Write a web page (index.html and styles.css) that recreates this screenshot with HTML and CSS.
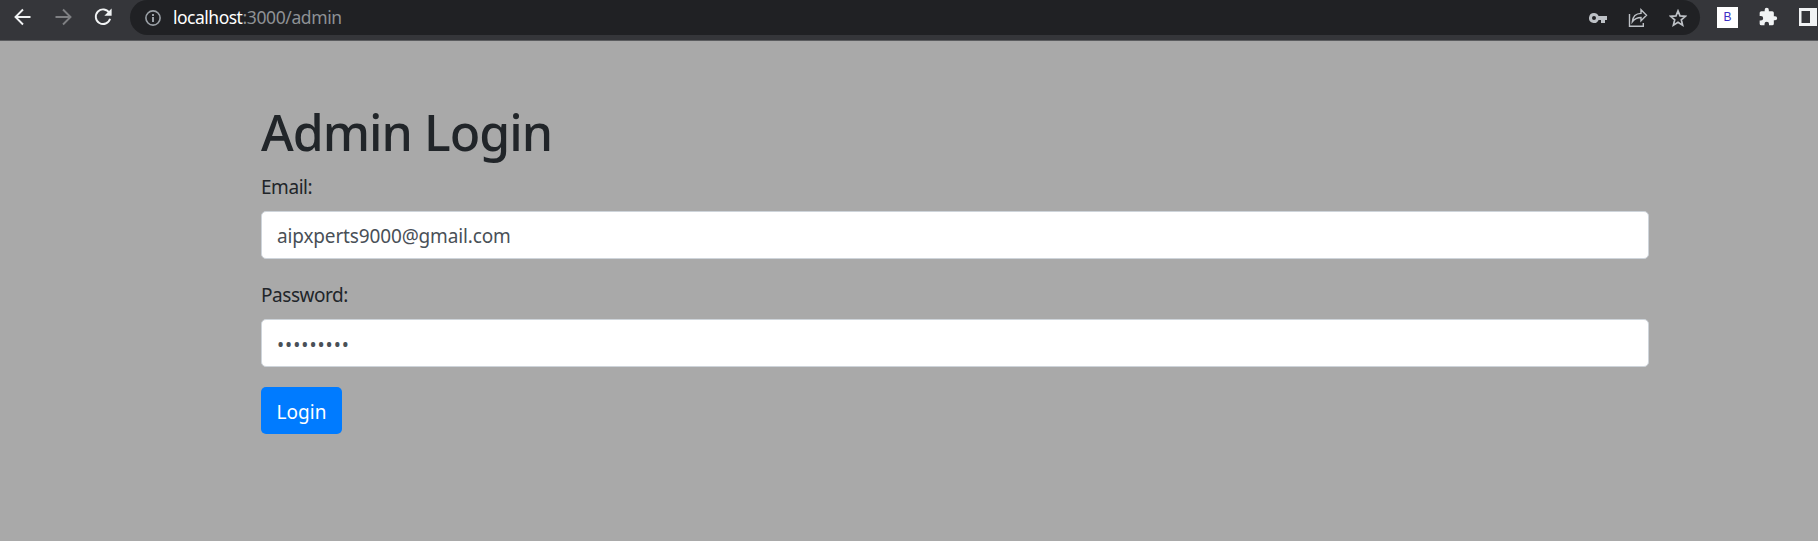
FILE: index.html
```html
<!DOCTYPE html>
<html lang="en">
<head>
<meta charset="utf-8">
<title>Admin Login</title>
<link rel="stylesheet" href="styles.css">
</head>
<body>
<header class="toolbar">
  <nav class="nav">
    <svg class="icon" viewBox="0 0 18 18"><path class="line" d="M16.500 9H2M9 1.500 1.500 9 9 16.500"/></svg>
    <svg class="icon dim" viewBox="0 0 18 18"><path class="line" d="M1.500 9H16M9 1.500 16.500 9 9 16.500"/></svg>
    <svg class="icon" viewBox="0 0 18 18"><path class="line" d="M15.400 5A7.300 7.300 0 1 0 16.100 10.800"/><path class="fill" d="M17.600.5v7.300h-7.300z"/></svg>
  </nav>
  <div class="address">
    <svg class="info" viewBox="0 0 16 16"><circle class="line" cx="8" cy="8" r="7.100"/><path class="fill" d="M7 7h2v5H7zM7 4h2v2H7z"/></svg>
    <span class="url"><span class="host">localhost</span><span class="path">:3000/admin</span></span>
    <div class="actions">
      <svg class="icon key" viewBox="0 0 18 18"><path class="fill" fill-rule="evenodd" d="M5 4a5 5 0 1 0 4.600 7H12v3h4v-3h2V7H9.600A5 5 0 0 0 5 4zm0 3a2 2 0 1 1 0 4 2 2 0 0 1 0-4z"/></svg>
      <svg class="share" viewBox="0 0 20 20"><path class="thin" d="M1.500 6v12.300h13.800V15M4.300 13.800C4.800 8.500 8.200 5.500 13 5.400V1.800l5.500 5.500-5.500 5.500V9.500c-3.800 0-6.500 1.300-8.700 4.300z"/></svg>
      <svg class="icon star" viewBox="0 0 18 18"><path class="line" d="m9 1.900 2 5 5.400.4-4.100 3.500 1.300 5.300L9 13.200l-4.600 2.900 1.300-5.300-4.100-3.500L7 6.900z"/></svg>
    </div>
  </div>
  <div class="extensions">
    <span class="badge">B</span>
    <svg class="puzzle" viewBox="0 0 24 24"><path class="fill" d="M20.500 11H19V7a2 2 0 0 0-2-2h-4V3.500a2.500 2.500 0 0 0-5 0V5H4a2 2 0 0 0-2 2v3.800h1.500a2.700 2.700 0 0 1 0 5.400H2V20a2 2 0 0 0 2 2h3.800v-1.500a2.700 2.700 0 0 1 5.400 0V22H17a2 2 0 0 0 2-2v-4h1.500a2.500 2.500 0 0 0 0-5z"/></svg>
    <svg class="panel" viewBox="0 0 18 18"><path class="fill" fill-rule="evenodd" d="M0 0h18v18H0zM2.500 3v12H11V3z"/></svg>
  </div>
</header>
<main class="container">
  <h1 class="title">Admin Login</h1>
  <form>
    <div class="group">
      <label class="label" for="email">Email:</label>
      <input class="control" id="email" type="text" value="aipxperts9000@gmail.com">
    </div>
    <div class="group">
      <label class="label" for="password">Password:</label>
      <input class="control secret" id="password" type="password" value="123456789">
    </div>
    <button class="button" type="button">Login</button>
  </form>
</main>
</body>
</html>
```
FILE: styles.css
```css
* { box-sizing: border-box; }
body {
  margin: 0;
  height: 541px;
  overflow: hidden;
  background: #a9a9a9;
  color: #212529;
  font-family: "Noto Sans", "Open Sans", sans-serif;
  font-size: 19px;
}
.toolbar {
  display: flex;
  align-items: flex-start;
  height: 41px;
  background: #35363a;
  border-bottom: 1px solid #5b5c5f;
  color: #f1f3f4;
}
.nav { display: flex; gap: 22px; width: 130px; padding: 8px 0 0 14px; }
svg { display: block; flex: none; }
.icon { width: 18px; height: 18px; }
.dim { color: #7f8083; }
.line { fill: none; stroke: currentColor; stroke-width: 1.9; }
.thin { fill: none; stroke: currentColor; stroke-width: 1.4; }
.fill { fill: currentColor; }
.address {
  display: flex;
  align-items: center;
  width: 1570px;
  height: 35px;
  padding: 0 13px 0 15px;
  border-radius: 17.5px;
  background: #202124;
  color: #bdc1c6;
}
.info { width: 16px; height: 16px; margin-top: 1px; color: #9aa0a6; }
.info .line { stroke-width: 1.6; }
.url { margin-left: 12px; font-size: 17.500px; letter-spacing: -.38px; line-height: 35px; }
.host { color: #fff; letter-spacing: -.5px; }
.path { color: #8e9195; }
.actions { display: flex; align-items: center; gap: 21px; margin-left: auto; }
.share { width: 20px; height: 20px; }
.star .line { stroke-width: 1.700; }
.extensions { display: flex; align-items: flex-start; padding-left: 17px; }
.badge {
  width: 21px;
  height: 21px;
  margin-top: 7px;
  background: #fff;
  color: #3b2fc4;
  font: 12px/21px "Liberation Sans", sans-serif;
  text-align: center;
}
.puzzle { width: 20px; height: 20px; margin: 7px 0 0 20px; }
.panel { width: 18px; height: 18px; margin: 8px 0 0 21px; }
.container { width: 1388px; margin: 61px 0 0 261px; }
.title { margin: 0 0 10px; font-size: 50px; font-weight: 500; line-height: 60px; letter-spacing: -1px; }
.group { margin-bottom: 20px; }
.label { display: block; height: 30px; margin-bottom: 9px; line-height: 30px; letter-spacing: -.45px; }
.control {
  display: block;
  width: 100%;
  height: 48px;
  padding: 2px 15px 0;
  border: 1px solid #ced4da;
  border-radius: 5px;
  background: #fff;
  color: #495057;
  font: inherit;
  letter-spacing: -.15px;
}
.group + .group .label { margin-top: 21px; }
.secret { padding-top: 3px; letter-spacing: .95px; }
.button {
  width: 81px;
  height: 47px;
  padding: 2px 0 0;
  border: 0;
  border-radius: 5px;
  background: #007bff;
  color: #fff;
  font: inherit;
}
```
